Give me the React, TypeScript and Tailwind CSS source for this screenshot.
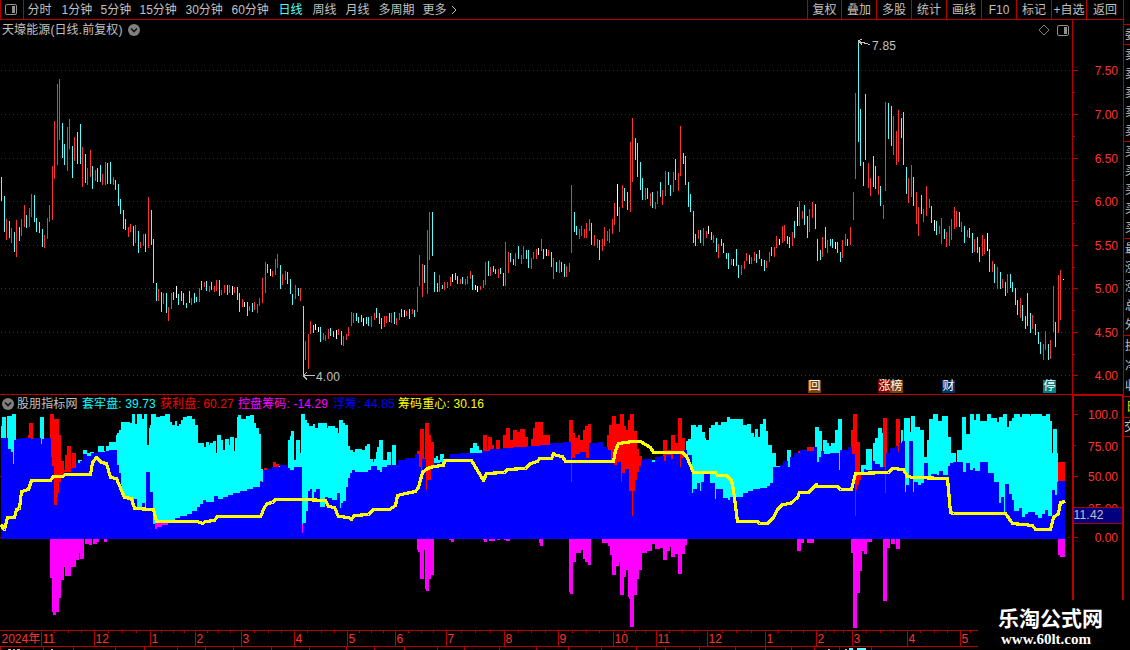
import React from 'react';

interface Tab {
  label: string;
  width: string;
  active?: boolean;
}

const TABS: Tab[] = [
  { label: '分时', width: 'w-[34px]' },
  { label: '1分钟', width: 'w-[39px]' },
  { label: '5分钟', width: 'w-[39px]' },
  { label: '15分钟', width: 'w-[46px]' },
  { label: '30分钟', width: 'w-[46px]' },
  { label: '60分钟', width: 'w-[47px]' },
  { label: '日线', width: 'w-[34px]', active: true },
  { label: '周线', width: 'w-[33px]' },
  { label: '月线', width: 'w-[33px]' },
  { label: '多周期', width: 'w-[44px]' },
  { label: '更多', width: 'w-[27px]' },
];

const ACTIONS = ['复权', '叠加', '多股', '统计', '画线', 'F10', '标记', '+自选', '返回'];

const LINE = '#b80000';
const UP = '#ff3232';
const DOWN = '#54ffff';

// x, high, low, r = up / c = down / w = flat
const CANDLES = `
1,177,201,c 4,196,232,c 6,219,240,r 9,221,238,c 11,228,243,r 14,232,252,c 16,220,257,r 19,227,241,c 21,219,236,r
24,205,227,r 26,215,228,c 29,208,227,r 31,194,217,r 34,195,222,c 36,218,232,c 39,222,233,c 42,229,247,c 44,235,248,r
47,218,239,r 49,205,222,r 52,166,220,r 54,121,179,r 57,84,165,r 59,79,140,r 62,123,158,c 64,144,165,c 67,127,171,r
69,119,149,r 72,146,178,c 74,137,161,r 77,132,164,c 80,124,164,c 82,147,187,r 85,154,183,c 87,168,185,r 90,150,177,r
92,166,189,c 95,170,181,r 97,168,182,c 100,165,182,c 102,174,185,r 105,162,185,r 107,163,184,c 110,162,184,c
113,177,185,r 115,180,190,c 118,184,206,c 120,199,214,c 123,210,229,c 125,219,230,c 128,227,237,r 130,224,232,r
133,226,246,c 135,225,243,r 138,231,253,c 140,242,248,r 143,234,246,r 145,234,252,c 148,197,248,r 151,210,245,c
153,239,283,c 156,283,301,c 158,289,301,r 161,292,312,c 163,293,304,r 166,293,313,c 168,307,321,r 171,293,309,r
173,292,300,c 176,286,298,w 178,294,305,c 181,291,301,c 183,293,305,c 186,303,308,c 189,291,303,c 191,298,305,r
194,293,303,c 196,297,302,c 199,288,302,r 201,281,290,c 204,282,287,r 206,281,291,c 209,286,292,r 211,282,290,c
214,286,292,r 216,280,291,r 219,280,296,c 221,290,295,r 224,285,293,r 227,285,295,c 229,285,293,r 232,286,295,w
234,287,293,r 237,287,300,c 239,293,312,c 242,299,307,r 244,302,307,w 247,302,316,c 249,306,311,r 252,303,312,c
254,302,310,r 257,304,313,r 259,298,306,r 262,278,303,r 265,262,293,r 267,264,273,c 270,269,276,w 272,271,277,r
275,259,275,r 277,254,268,r 280,265,289,c 282,274,285,r 285,271,280,r 287,272,284,c 290,279,294,c 292,294,305,c
295,285,299,r 298,288,296,c 300,288,301,r 303,306,375,c 305,341,360,r 308,334,369,r 310,321,334,r 313,325,333,c
315,324,330,w 318,327,332,w 320,327,342,c 323,333,340,r 325,335,341,r 328,329,339,r 330,328,336,c 333,331,337,c
336,330,339,w 338,329,335,r 341,331,345,c 343,336,346,r 346,334,340,r 348,327,336,r 351,312,326,r 353,313,323,r
356,313,321,c 358,317,323,c 361,315,322,c 363,318,326,w 366,317,324,c 368,317,326,c 371,316,327,r 374,313,320,r
376,308,318,c 379,313,324,c 381,318,329,c 384,316,327,r 386,316,323,r 389,313,322,c 391,313,323,r 394,312,324,c
396,318,325,r 399,313,320,r 401,309,317,c 404,310,317,w 406,311,316,r 409,309,319,c 412,309,314,r 414,310,317,c
417,287,312,r 419,255,286,r 422,264,297,r 424,265,283,c 427,230,294,r 429,212,260,r 432,212,256,c 434,272,292,c
437,283,292,c 439,275,292,r 442,285,289,c 444,282,290,r 447,282,288,r 450,277,286,r 452,274,282,w 455,273,280,c
457,276,284,c 460,279,284,r 462,277,284,c 465,279,285,r 467,276,284,r 470,271,279,r 472,275,290,c 475,285,290,w
477,286,292,w 480,286,290,r 483,280,288,r 485,262,285,r 488,261,276,c 490,267,276,r 493,266,272,c 495,269,274,c
498,269,278,r 500,268,274,c 503,273,286,c 505,242,286,r 508,252,273,r 510,253,262,c 513,259,265,c 515,253,266,r
518,246,259,c 521,255,264,r 523,246,259,r 526,250,259,c 528,250,268,c 531,258,269,r 533,252,259,r 536,249,259,r
538,248,255,w 541,239,251,r 543,249,259,c 546,249,256,w 548,250,256,r 551,252,267,c 553,258,279,r 556,262,272,c
559,260,273,r 561,262,272,c 564,264,277,c 566,266,277,r 569,263,272,r 571,185,253,r 574,212,232,c 576,226,235,c
579,229,239,r 581,226,236,r 584,229,238,r 586,223,238,r 589,219,231,r 591,223,245,c 594,235,246,r 597,239,248,r
599,240,260,c 602,239,251,r 604,227,246,r 607,231,241,r 609,229,243,r 612,219,234,r 614,203,225,r 617,184,216,w
619,207,232,r 622,185,208,r 624,188,201,c 627,192,210,c 630,142,212,r 632,118,182,r 635,138,160,c 637,143,177,c
640,162,190,c 642,178,200,c 645,188,200,r 647,188,199,c 650,193,206,r 652,192,208,c 655,202,209,r 657,191,204,r
660,182,197,c 662,190,205,r 665,171,196,r 668,172,185,c 670,185,196,c 673,172,192,r 675,159,180,c 678,173,191,r
680,126,176,r 683,153,164,c 685,156,185,c 688,182,207,c 690,194,212,c 693,211,243,c 695,234,246,c 698,230,239,r
700,230,243,c 703,228,246,r 706,231,238,r 708,226,234,w 711,232,240,c 713,235,243,r 716,238,252,c 718,244,258,r
721,239,246,c 723,243,253,c 726,253,259,c 728,253,269,c 731,259,265,r 733,259,266,w 736,249,266,c 738,265,278,c
741,265,275,r 744,261,269,r 746,253,261,r 749,255,264,c 751,257,264,r 754,252,261,r 756,254,263,c 759,250,259,c
761,259,266,c 764,260,271,c 766,261,268,r 769,252,262,r 771,247,256,c 774,247,257,r 776,236,248,r 779,239,245,w
782,226,243,r 784,225,241,r 787,236,244,c 789,237,248,c 792,232,246,r 794,221,238,c 797,207,226,w 799,201,226,r
802,211,219,r 804,205,225,c 807,216,238,c 809,209,232,r 812,202,218,r 815,204,229,c 817,239,261,c 820,250,260,c
822,237,257,r 825,227,248,c 827,240,253,r 830,239,246,c 832,239,248,c 835,242,249,w 837,242,253,c 840,252,262,c
842,240,258,r 845,234,246,r 847,239,246,c 850,227,245,r 853,192,220,r 855,93,179,r 858,42,142,c 860,109,166,c
863,162,186,c 865,94,160,c 868,163,188,r 870,178,196,r 873,156,187,c 875,166,189,c 878,176,195,r 880,186,206,c
883,205,219,r 885,102,191,r 888,103,139,c 891,106,146,c 893,116,155,r 896,131,165,r 898,110,162,r 901,118,138,c
903,112,165,c 906,167,194,c 908,178,203,r 911,165,197,r 913,177,206,c 916,192,224,r 918,207,236,r 921,195,214,c
923,209,222,r 926,186,216,r 929,199,208,r 931,206,223,c 934,220,231,w 936,221,235,c 939,226,234,r 941,218,244,r
944,229,239,c 946,232,247,r 949,226,246,r 951,219,240,r 954,207,229,r 956,211,227,r 959,212,227,c 961,222,232,r
964,226,243,c 967,230,237,r 969,228,238,c 972,233,253,c 974,239,252,r 977,237,253,c 979,247,262,c 982,235,256,r
984,239,254,r 987,233,251,w 989,249,272,c 992,261,272,r 994,264,283,c 997,267,289,r 1000,272,289,c 1002,279,288,r
1005,282,296,c 1007,274,293,r 1010,274,288,c 1012,282,292,c 1015,288,305,c 1017,300,315,c 1020,298,318,r
1022,305,321,c 1025,316,329,c 1027,293,326,c 1030,313,333,c 1032,315,329,r 1035,324,335,c 1038,332,344,c
1040,342,354,c 1043,344,360,r 1045,331,350,r 1048,344,360,c 1050,340,359,r 1053,286,332,r 1055,322,347,c
1058,275,333,r 1060,270,320,r 1063,279,280,w
`;

// Step series: "x,y x,y ... endX"
const CYAN_RUNS = [
  '1,426 2,417 6,438 7,416 12,414 16',
  '40,417 44',
  '78,460 82,461 83,450 87,453 90,452 94,453 98,446 104,451 106,446 109,442 116,435 117,433 119,430 121,422 130,423 132,414 135,424 137,414 142,419 144,414 147,445 149,428 150,425 151,414 156,417 160,416 165,414 170,422 172,425 175,421 177,426 179,424 181,420 183,417 187,416 192,419 195,425 198,443 204,447 206,442 209,445 210,443 213,441 216,453 217,435 221,440 223,450 225,439 229,445 230,437 234,451 235,438 237,417 238,415 241,419 246,416 250,415 254,423 256,428 259,434 261',
  '260,469 263',
  '279,466 281',
  '288,440 290,436 291,431 294,460 296,440 300,453 301,414 305,420 307,423 309,426 313,424 315,428 318,423 327,428 328,426 335,428 338,433 339,420 343,423 345,425 348,446 350,450 353,452 355,449 362,450 365,446 367,444 370,459 373,462 374,459 376,452 377,447 379,440 383,460 387,452 391,465 392,445 396',
  '434,458 436,456 438,460 440,454 444',
  '470,448 473,443 477,446 479,450 482',
  '652,460 655',
  '686,441 688,439 691,425 696,427 698,425 702,432 705,438 706,440 709,428 711,425 715,422 718,425 721,422 727,417 730,419 743,425 747,424 751,433 754,437 755,429 758,437 760,424 763,419 766,431 768,445 772,453 776,466 780',
  '787,450 791',
  '815,427 819,431 822,453 823,440 827,443 829,446 831,443 835,430 838,419 842',
  '861,465 866,449 872,464 873,443 875,438 878,428 882,433 883',
  '901,430 903,442 904,418 910,432 911,416 915,427 920,430 924,457 927,440 929,419 933,414 938,421 942,416 948,437 951,453 956,463 957,450 962,417 966,434 970,414 974,420 976,414 980,421 987,414 991,418 997,422 999,417 1003,414 1007,427 1009,421 1012,418 1014,414 1020,417 1022,414 1030,416 1031,414 1042,416 1046,414 1050,421 1052,453 1053,429 1057,453 1058',
];

const RED_RUNS = [
  '28,435 29,423 33',
  '50,414 54,419 59,435 61,461 64,470 65,455 67,446 71,467 72,453 76',
  '197,507 199',
  '260,481 262',
  '264,468 267',
  '273,462 276,464 279',
  '417,451 420,429 424,458 425,423 429,435 431,442 434',
  '483,435 487,450 488,437 492,445 494,451 496,440 500',
  '503,435 506,428 510,440 513,430 517,432 520,429 525,437 528',
  '531,439 533,428 535,422 543,435 550',
  '569,420 573,433 575,438 578,435 580,440 583,430 585,426 588,424 591',
  '607,435 609,425 612,416 616,424 620,414 624,426 626,430 628,420 630,414 634,431 637,449 639,456 642',
  '663,440 667,450 671,435 675,443 678,418 682,438 685',
  '798,451 801',
  '807,447 814',
  '851,430 853,414 857,442 860,474 862',
  '883,418 887',
  '896,419 900',
  '1058,462 1065',
];

const MAGENTA_TRACES = ['155,523 169', '302,524 303'];

const BLUE_RUNS = [
  '1,438 8,449 11,452 13,464 14,440 16,439 20,438 31,439 33,438 41,444 42,439 44,438 51,457 52,466 54,505 57,497 58,493 59,482 61,478 62,475 64,472 71,468 76,463 80,461 83,454 87,456 91,453 98,452 105,451 109,450 117,465 119,473 121,485 122,492 124,497 131,505 134,499 137,507 142,503 145,507 146,472 150,492 153,524 155,529 157,527 162,525 168,520 175,518 180,516 187,514 192,511 197,507 200,504 203,500 206,502 214,496 218,499 223,497 228,495 233,493 240,491 247,489 253,487 260,482 263,470 267,469 272,467 280,465 287,468 290,470 294,467 302,533 303,523 306,511 308,491 310,489 312,498 314,492 316,489 320,507 325,497 328,498 332,500 337,493 340,508 341,503 343,501 346,487 348,478 350,473 352,470 355,472 368,470 371,466 377,470 380,472 382,467 387,465 398,460 405,458 415,454 419,467 421,483 422,459 426,490 427,480 431,468 434,463 440,462 443,458 450,454 460,453 482,451 490,449 503,448 513,447 527,446 540,445 550,443 563,442 571,482 572,458 575,454 580,452 586,458 589,443 598,442 603,447 608,450 611,460 614,465 617,462 621,482 622,473 625,469 629,491 632,516 633,491 635,480 637,472 639,466 641,460 643,459 652,462 655,457 660,456 664,461 666,455 671,459 673,454 680,467 681,458 684,450 687,455 692,493 693,489 697,483 700,491 701,482 704,474 710,483 715,499 716,489 723,498 728,500 730,497 743,493 748,491 753,489 760,488 767,486 770,483 773,467 780,465 783,461 788,467 790,457 794,453 800,450 807,451 814,447 817,462 819,457 821,451 824,454 830,453 839,470 840,450 848,447 852,454 855,516 856,490 857,485 859,480 861,473 864,469 866,470 872,461 875,464 880,467 885,493 886,453 890,448 895,446 898,452 899,443 902,441 905,492 906,485 909,441 913,492 914,482 918,485 921,483 924,463 928,478 931,474 937,475 939,471 943,475 948,466 950,463 953,462 963,472 966,463 970,470 973,468 975,471 980,462 988,473 994,482 999,503 1001,497 1004,513 1005,484 1009,494 1012,500 1014,511 1019,508 1022,517 1025,514 1028,512 1035,515 1038,518 1042,514 1045,510 1048,516 1052,490 1055,495 1057,482 1058,481 1065',
];

const NEGATIVE_RUNS = [
  '50,578 52,612 53,615 56,612 59,598 61,580 64,567 65,576 71,567 76,560 79,553 80,559 84',
  '85,544 89,545 92',
  '93,544 97,542 99',
  '104,542 107',
  '417,550 418,552 420,579 424,550 425,589 426,591 429,579 431,575 434',
  '449,540 451,542 454',
  '483,540 484,542 487',
  '489,541 495',
  '497,540 500',
  '504,540 506,541 510',
  '539,543 540,546 543',
  '569,592 570,594 573,562 576,553 581,550 583,559 585,562 588,565 591',
  '602,543 608,546 610,555 612,575 616,566 619,562 620,595 624,577 626,570 628,597 629,599 630,627 634,595 637,579 639,570 642,553 647,551 652,544 655,549 660,548 663,560 667,551 670,547 671,557 675,554 678,574 682,554 685,545 687',
  '797,551 801,543 804',
  '807,543 814',
  '851,553 853,628 857,593 860,571 862,551 864,554 867,542 872',
  '883,601 887,548 890',
  '891,544 895',
  '896,549 900',
  '1058,555 1060,557 1065',
];

const CENTER_LINE =
  '1,524 2,527 4,529 7,517 14,517 16,509 19,508 21,491 28,489 31,480 50,480 53,476 62,476 65,474 90,474 92,462 96,457 101,462 106,463 110,477 116,478 124,497 131,498 134,508 153,509 156,521 197,521 202,523 205,521 214,520 217,516 260,516 264,507 267,503 272,502 275,499 302,499 325,500 328,506 334,507 338,516 348,517 351,519 354,515 368,514 373,509 389,509 395,505 397,495 405,493 415,491 418,487 422,472 427,468 433,466 443,465 444,460 471,460 477,470 483,480 486,473 504,472 507,469 525,468 530,463 537,461 539,458 551,458 553,453 556,455 562,456 565,461 613,461 615,450 618,443 632,441 640,441 650,447 653,452 682,452 686,456 693,472 715,472 717,475 726,475 731,480 733,490 737,521 757,521 759,523 767,523 773,517 777,509 782,504 790,503 797,497 799,492 808,492 816,484 817,486 837,486 840,489 851,489 855,473 888,472 892,468 903,469 907,476 913,477 947,478 950,512 953,513 1005,513 1012,523 1032,525 1035,529 1050,529 1053,517 1058,513 1060,502 1065,501';

const BASELINE = 539;

function stepPath(run: string, base = BASELINE) {
  const points = run.split(' ').map((p) => p.split(',').map(Number));
  let d = `M${points[0][0]} ${base}`;
  points.forEach(([x, y]) => {
    d += y === undefined ? `H${x}V${base}` : `H${x}V${y}`;
  });
  return d + 'Z';
}

const PRICES = [
  { y: 70, label: '7.50' },
  { y: 114, label: '7.00' },
  { y: 158, label: '6.50' },
  { y: 201, label: '6.00' },
  { y: 245, label: '5.50' },
  { y: 288, label: '5.00' },
  { y: 332, label: '4.50' },
  { y: 375, label: '4.00' },
];

const MONTHS: [number, string][] = [
  [41, '11'], [94, '12'], [150, '1'], [195, '2'], [241, '3'], [294, '4'], [347, '5'], [395, '6'], [446, '7'],
  [504, '8'], [558, '9'], [613, '10'], [656, '11'], [707, '12'], [765, '1'], [816, '2'], [852, '3'], [907, '4'], [960, '5'],
];

const LOWER_TICKS = [
  0, 43, 73, 115, 144, 177, 205, 233, 271, 309, 346, 374, 404, 437, 464, 499, 536, 568, 601, 636, 665, 699, 735, 765,
  791, 814, 839, 871,
];

// Left edges of the quote panel's labels
const QUOTE_GROUPS = [
  { height: 'h-[9px]', labels: [] },
  { height: 'h-[20px]', labels: ['委'] },
  { height: 'h-[97px]', labels: ['卖', '卖', '卖', '卖', '卖'] },
  { height: 'h-[97px]', labels: ['买', '买', '买', '买', '买'] },
  { height: 'h-[97px]', labels: ['最', '涨', '涨', '总', '外'] },
  { height: 'h-[61px]', labels: ['换', '净', '收'] },
];

function ChevronBadge() {
  return (
    <svg width="12" height="12" viewBox="0 0 12 12" className="shrink-0">
      <circle cx="6" cy="6" r="6" fill="#808080" />
      <path d="M3 4.5L6 7.5L9 4.5" fill="none" stroke="#111" strokeWidth="1.6" />
    </svg>
  );
}

function PanelIcon() {
  return (
    <svg width="12" height="11" viewBox="0 0 12 11" className="shrink-0">
      <rect x="0.5" y="0.5" width="11" height="10" rx="1.5" fill="none" stroke="#909090" />
      <rect x="7" y="2" width="3" height="7" fill="#909090" />
    </svg>
  );
}

function Toolbar() {
  return (
    <div className="flex h-5 items-stretch border-b border-[#b80000] leading-[18px]">
      <div className="flex w-6 items-center border-x border-[#b80000] pl-1">
        <PanelIcon />
      </div>
      <div className="flex flex-1 items-center pt-px pl-[3.5px]">
        {TABS.map((tab) => (
          <span
            key={tab.label}
            className={`${tab.width} shrink-0 whitespace-nowrap ${tab.active ? 'text-[#54ffff]' : ''}`}
          >
            {tab.label}
          </span>
        ))}
        <svg width="8" height="10" viewBox="0 0 8 10" className="-mt-px">
          <path d="M2 1L6 5L2 9" fill="none" stroke="#c0c0c0" />
        </svg>
      </div>
      {ACTIONS.map((action, index) => (
        <button
          key={action}
          className={`border-l border-[#b80000] pt-px whitespace-nowrap ${
            index === 0 ? 'w-[34px]' : index === ACTIONS.length - 1 ? 'w-[37px]' : 'w-[35px]'
          }`}
        >
          {action}
        </button>
      ))}
    </div>
  );
}

function CandleChart() {
  return (
    <svg
      width="1072"
      height="339"
      viewBox="0 40 1072 339"
      shapeRendering="crispEdges"
      className="block overflow-visible"
    >
      {PRICES.map(({ y }) => (
        <line key={y} x1="1" x2="1072" y1={y + 0.5} y2={y + 0.5} stroke="#a80000" strokeDasharray="1 3" />
      ))}
      {CANDLES.trim().split(/\s+/).map((item) => {
        const [x, high, low, kind] = item.split(',');
        const fill = kind === 'r' ? UP : kind === 'c' ? DOWN : '#ffffff';
        return <rect key={x} x={x} y={high} width="1" height={Number(low) - Number(high)} fill={fill} />;
      })}
      <path d="M858.5 44V40.5M858 40.5L862 39.5M859 41.5L870 44.5M859 41.5L862 44.5" stroke="#c0c0c0" fill="none" />
      <text x="872" y="50" fill="#c0c0c0" letterSpacing="0.2">7.85</text>
      <path d="M303 375.5H315M303 375.5L307 372.5M303 375.5L307 379.5" stroke="#c0c0c0" fill="none" />
      <text x="316" y="381" fill="#c0c0c0" letterSpacing="0.2">4.00</text>
    </svg>
  );
}

function PriceAxis() {
  return (
    <svg width="51" height="375" viewBox="1072 20 51 375" shapeRendering="crispEdges" className="block">
      <path d="M1072.5 20V394" stroke={LINE} />
      {PRICES.map(({ y, label }, index) => (
        <g key={label}>
          <path d={`M1072 ${y + 0.5}H1078`} stroke={LINE} />
          {index < PRICES.length - 1 && <path d={`M1072 ${y + 22.5}H1075`} stroke={LINE} />}
          <text x="1118" y={y + 5} textAnchor="end" fill={UP}>{label}</text>
        </g>
      ))}
    </svg>
  );
}

function IndicatorChart() {
  return (
    <svg width="1072" height="219" viewBox="0 411 1072 219" shapeRendering="crispEdges" className="block">
      <path d="M0 476.5H1072M0 537.5H1072" stroke="#a80000" strokeDasharray="1 3" />
      {CYAN_RUNS.map((run) => <path key={run} d={stepPath(run)} fill="#00ffff" />)}
      {RED_RUNS.map((run) => <path key={run} d={stepPath(run)} fill="#ff0000" />)}
      {MAGENTA_TRACES.map((run) => <path key={run} d={stepPath(run)} fill="#ff00ff" />)}
      {BLUE_RUNS.map((run) => <path key={run} d={stepPath(run)} fill="#0000ff" />)}
      {NEGATIVE_RUNS.map((run) => <path key={run} d={stepPath(run)} fill="#ff00ff" />)}
      <polyline
        points={CENTER_LINE}
        transform="translate(0.5 0.5)"
        fill="none"
        stroke="#ffff00"
        strokeWidth="3.2"
        strokeLinejoin="round"
      />
    </svg>
  );
}

function IndicatorAxis() {
  return (
    <svg width="52" height="206" viewBox="1072 394 52 206" shapeRendering="crispEdges" className="block">
      <path d="M1073 600V395H1123V600" fill="none" stroke={LINE} strokeWidth="2" />
      <path d="M1074 414.5H1078M1074 445.5H1076M1074 476.5H1078M1074 537.5H1078" stroke={LINE} />
      <g fill={UP} textAnchor="end">
        <text x="1118" y="419">100.0</text>
        <text x="1118" y="451">75.00</text>
        <text x="1118" y="481">50.00</text>
        <text x="1118" y="513">25.00</text>
        <text x="1118" y="542">0.00</text>
      </g>
      <rect x="1074" y="507" width="48" height="17" fill="#000080" />
      <path d="M1073 507.5H1123M1073 523.5H1123" stroke={LINE} />
      <text x="1073.5" y="519" fill="#c0c0c0" letterSpacing="0.2">11.42</text>
    </svg>
  );
}

function TimeAxis() {
  const ends = MONTHS.map(([x]) => x).concat(1000);
  return (
    <svg width="978" height="20" viewBox="0 630 978 20" shapeRendering="crispEdges" className="block">
      <path d="M0 630.5H978M0 646.5H978" stroke={LINE} />
      <text x="1.5" y="643" fill={UP}>2024年</text>
      {MONTHS.map(([x, label], index) => {
        const gap = (ends[index + 1] - x) / 4;
        return (
          <g key={x}>
            <path d={`M${x + 0.5} 630V646`} stroke={LINE} />
            {[1, 2, 3].map((n) => (
              <path key={n} d={`M${Math.round(x + gap * n) + 0.5} 631V633`} stroke={LINE} />
            ))}
            <text x={x + 1.5} y="643" fill={UP}>{label}</text>
          </g>
        );
      })}
      {LOWER_TICKS.map((x) => <path key={x} d={`M${x + 0.5} 647V650`} stroke={LINE} />)}
      <path d="M8 649.5H11M13 649.5H15M17 649.5H20M51 649.5H53M828 649.5H830M845 649.5H847" stroke="#c0c0c0" />
      <path d="M849 649H853M857 649H866" stroke={DOWN} strokeWidth="2" />
    </svg>
  );
}

function EventBadges() {
  const badge = 'flex h-[13px] w-[13px] items-center justify-center text-[12px] leading-[13px] text-white';
  return (
    <div className="relative flex h-[15px] items-start pt-[1px] pl-[808px]">
      <span className={`${badge} bg-[#804000]`}>回</span>
      <span className={`${badge} ml-[57px] bg-[#800000]`}>涨</span>
      <span className={`${badge} -ml-px bg-[#804000]`}>榜</span>
      <span className={`${badge} ml-[39px] bg-[#003366]`}>财</span>
      <span className={`${badge} ml-[88px] bg-[#008080]`}>停</span>
    </div>
  );
}

function IndicatorHeader() {
  return (
    <div className="flex h-[16px] items-center pt-px pl-[2px] leading-[16px] tracking-[0.12px] whitespace-pre">
      <ChevronBadge />
      <span className="ml-[3px] w-[65px] shrink-0">股朋指标网</span>
      <span className="w-[78px] shrink-0 text-[#00ffff]">套牢盘: 39.73</span>
      <span className="w-[78px] shrink-0 text-[#ff0000]">获利盘: 60.27</span>
      <span className="w-[95px] shrink-0 text-[#ff00ff]">控盘筹码: -14.29</span>
      <span className="w-[65px] shrink-0 text-[#0000ff]">浮筹: 44.85</span>
      <span className="text-[#ffff00]">筹码重心: 30.16</span>
    </div>
  );
}

function QuoteStrip() {
  return (
    <div className="flex w-[6px] flex-col overflow-hidden pt-[16px]">
      {QUOTE_GROUPS.map((group, index) => (
        <div
          key={index}
          className={`${group.height} flex shrink-0 flex-col justify-around overflow-hidden border-b border-[#b80000] pl-px`}
        >
          {group.labels.map((label, i) => (
            <span key={i} className="w-3 leading-[18px]">{label}</span>
          ))}
        </div>
      ))}
      <div className="h-[21px] shrink-0 border-b border-[#b80000] pl-[2px] leading-[20px] text-[#e0e000]">
        <span className="block w-3">日</span>
      </div>
      <div className="h-[19px] shrink-0 border-b border-[#b80000] leading-[18px]">
        <span className="block w-3">交</span>
      </div>
    </div>
  );
}

export default function App() {
  return (
    <div className="relative flex h-[650px] w-[1130px] overflow-hidden bg-black font-['Liberation_Sans','Noto_Sans_CJK_SC',sans-serif] text-[12px] text-[#c0c0c0]">
      <div className="flex w-[1124px] shrink-0 flex-col border-r border-[#b80000]">
        <Toolbar />
        <div className="flex h-[375px] border-b border-[#b80000]">
          <div className="w-[1072px] shrink-0">
            <div className="flex h-5 items-center pr-[3px] pl-[2px] leading-5">
              <span className="tracking-[0.1px]">天壕能源(日线.前复权)</span>
              <span className="ml-[5px] flex-1"><ChevronBadge /></span>
              <svg width="12" height="12" viewBox="0 0 12 12" className="mr-[7px]">
                <path d="M6 1L11 6L6 11L1 6Z" fill="none" stroke="#808080" />
              </svg>
              <PanelIcon />
            </div>
            <CandleChart />
            <EventBadges />
          </div>
          <PriceAxis />
        </div>
        <div className="flex h-[235px]">
          <div className="w-[1072px] shrink-0">
            <IndicatorHeader />
            <IndicatorChart />
          </div>
          <div className="-mt-px w-[52px] shrink-0">
            <IndicatorAxis />
          </div>
        </div>
        <TimeAxis />
      </div>
      <QuoteStrip />
      <div className="absolute top-[600px] left-[978px] h-[50px] w-[152px] bg-black pt-[6px] pl-5 text-white">
        <div className="text-[21px] leading-[26px] font-bold">乐淘公式网</div>
        <div className="pl-[3px] font-['Liberation_Serif',serif] text-[15px] leading-[15px] font-bold">www.60lt.com</div>
      </div>
    </div>
  );
}
